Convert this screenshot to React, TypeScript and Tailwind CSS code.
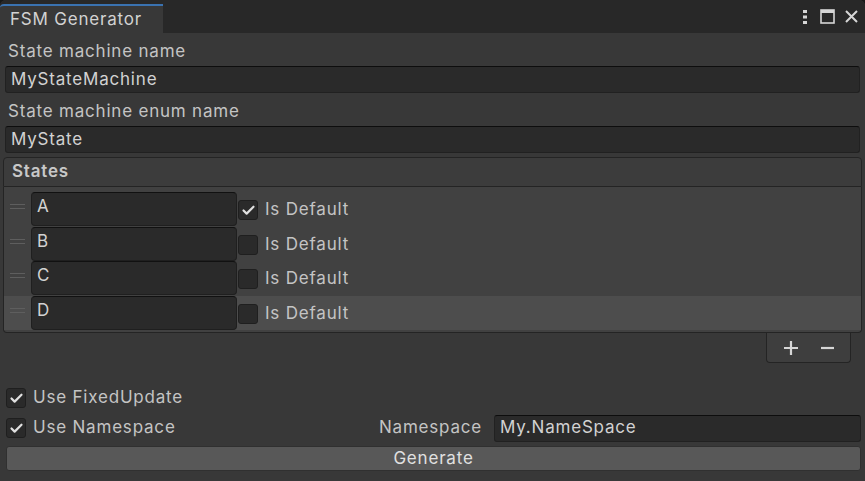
import { Check } from 'lucide-react';

const STATES = [
  { name: 'A', isDefault: true },
  { name: 'B', isDefault: false },
  { name: 'C', isDefault: false },
  { name: 'D', isDefault: false },
];

function TextField({ value, className = '' }: { value: string; className?: string }) {
  return (
    <div
      className={`flex h-[27px] items-center rounded-[3px] border border-[#212121] border-t-[#0d0d0d] bg-[#2a2a2a] px-[5px] text-[#d2d2d2] ${className}`}
    >
      {value}
    </div>
  );
}

function Checkbox({ checked }: { checked: boolean }) {
  return (
    <div className="flex size-[20px] shrink-0 items-center justify-center rounded-[3px] border border-[#1f1f1f] bg-[#2a2a2a]">
      {checked && <Check className="size-[15px] text-[#e0e0e0]" strokeWidth={3.5} />}
    </div>
  );
}

function DragHandle() {
  return (
    <div className="flex w-[27px] shrink-0 flex-col items-center gap-[3px] pt-[12px]">
      <div className="h-px w-[15px] bg-[#5e5e5e]" />
      <div className="h-px w-[15px] bg-[#5e5e5e]" />
    </div>
  );
}

export default function App() {
  return (
    <div
      className="h-[481px] w-[865px] overflow-hidden bg-[#191919] text-[17px] tracking-[0.8px] text-[#c4c4c4]"
      style={{ fontFamily: 'Inter, "Noto Sans", sans-serif' }}
    >
      <div className="flex h-full flex-col rounded-t-[6px] bg-[#383838]">
        {/* Tab bar */}
        <div className="flex h-[33px] shrink-0 items-end justify-between rounded-t-[6px] bg-[#282828]">
          <div className="flex h-[29px] w-[163px] items-center rounded-tl-[4px] border-t-2 border-[#3a72b0] bg-[#383838] pl-[10px] text-[#d2d2d2]">
            FSM Generator
          </div>
          <div className="flex h-[33px] items-center gap-[9px] pr-[6px] text-[#d6d6d6]">
            <svg width="6" height="16" viewBox="0 0 6 16" className="mr-[3px]">
              <rect x="1" y="1" width="4" height="3" fill="currentColor" />
              <rect x="1" y="6.5" width="4" height="3" fill="currentColor" />
              <rect x="1" y="12" width="4" height="3" fill="currentColor" />
            </svg>
            <svg width="15" height="15" viewBox="0 0 15 15">
              <rect x="1" y="1" width="13" height="13" fill="none" stroke="currentColor" strokeWidth="1.6" />
              <rect x="1" y="1" width="13" height="3" fill="currentColor" />
            </svg>
            <svg width="15" height="15" viewBox="0 0 15 15">
              <path d="M2 2 L13 13 M13 2 L2 13" stroke="currentColor" strokeWidth="2" />
            </svg>
          </div>
        </div>

        {/* Fields */}
        <div className="flex flex-col px-[5px] pt-[4px]">
          <div className="flex h-[29px] items-center pl-[3px]">State machine name</div>
          <TextField value="MyStateMachine" />
          <div className="mt-[4px] flex h-[29px] items-center pl-[3px]">State machine enum name</div>
          <TextField value="MyState" />
        </div>

        {/* States list */}
        <div className="mx-[3px] mt-[4px] flex flex-col">
          <div className="flex h-[30px] items-center rounded-t-[4px] border border-[#242424] bg-[#3c3c3c] pl-[8px] font-semibold text-[#c8c8c8]">
            States
          </div>
          <div className="flex flex-col rounded-b-[4px] border border-t-0 border-[#242424] bg-[#414141] pt-[5px] pb-[2px]">
            {STATES.map((s, i) => (
              <div
                key={s.name}
                className={`flex h-[34.5px] items-start ${i === STATES.length - 1 ? 'bg-[#4d4d4d]' : ''}`}
              >
                <DragHandle />
                <div className="flex h-[34px] w-[206px] shrink-0 items-start rounded-[4px] border border-[#1f1f1f] border-t-[#111111] bg-[#2a2a2a] px-[5px] pt-[1px] text-[#d2d2d2]">
                  {s.name}
                </div>
                <div className="ml-[1px] flex h-[34px] items-center gap-[7px] pt-[2px]">
                  <Checkbox checked={s.isDefault} />
                  <span>Is Default</span>
                </div>
              </div>
            ))}
          </div>
          <div className="flex justify-end pr-[11px]">
            <div className="flex h-[30px] w-[85px] items-center justify-center gap-[22px] rounded-b-[4px] border border-t-0 border-[#242424] bg-[#3e3e3e] text-[#d6d6d6]">
              <svg width="16" height="16" viewBox="0 0 16 16">
                <path d="M8 1 V15 M1 8 H15" stroke="currentColor" strokeWidth="2.2" />
              </svg>
              <svg width="13" height="16" viewBox="0 0 13 16">
                <path d="M0 8 H13" stroke="currentColor" strokeWidth="2.2" />
              </svg>
            </div>
          </div>
        </div>

        {/* Options */}
        <div className="mt-[20px] flex flex-col pl-[6px] pr-[4px]">
          <div className="flex h-[30px] items-center gap-[7px]">
            <Checkbox checked />
            <span>Use FixedUpdate</span>
          </div>
          <div className="flex h-[30px] items-center">
            <div className="flex flex-1 items-center gap-[7px]">
              <Checkbox checked />
              <span>Use Namespace</span>
            </div>
            <span className="mr-[12px]">Namespace</span>
            <TextField value="My.NameSpace" className="w-[367px]" />
          </div>
          <div className="mt-[3px] flex h-[25px] items-center justify-center rounded-[3px] border border-[#303030] bg-[#585858] text-[#e0e0e0]">
            Generate
          </div>
        </div>
      </div>
    </div>
  );
}
